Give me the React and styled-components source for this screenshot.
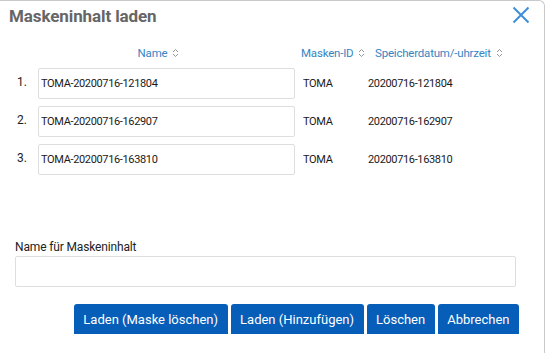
import styled, { createGlobalStyle } from 'styled-components';

const GlobalStyle = createGlobalStyle`
  html, body {
    margin: 0;
    padding: 0;
    background: #ffffff;
  }
  body {
    font-family: 'Source Sans Pro', Roboto, 'Liberation Sans', sans-serif;
  }
`;

const entries = [
  { name: 'TOMA-20200716-121804', id: 'TOMA', date: '20200716-121804' },
  { name: 'TOMA-20200716-162907', id: 'TOMA', date: '20200716-162907' },
  { name: 'TOMA-20200716-163810', id: 'TOMA', date: '20200716-163810' },
];

function SortIcon() {
  return (
    <SortSvg width="7" height="10" viewBox="0 0 7 10">
      <path d="M1 4 L3.5 1.5 L6 4" fill="none" stroke="#8a8a8a" strokeWidth="0.9" />
      <path d="M1 6 L3.5 8.5 L6 6" fill="none" stroke="#8a8a8a" strokeWidth="0.9" />
    </SortSvg>
  );
}

export default function App() {
  return (
    <>
      <GlobalStyle />
      <Dialog>
        <TitleBar>
          <Title>Maskeninhalt laden</Title>
          <CloseButton aria-label="Schließen">
            <svg width="18" height="18" viewBox="0 0 18 18">
              <path d="M1.5 1.5 L16.5 16.5 M16.5 1.5 L1.5 16.5" stroke="#3f8fd8" strokeWidth="2" fill="none" />
            </svg>
          </CloseButton>
        </TitleBar>

        <Table>
          <span />
          <HeaderCell align="center">
            Name <SortIcon />
          </HeaderCell>
          <HeaderCell pad={6}>
            Masken-ID <SortIcon />
          </HeaderCell>
          <HeaderCell pad={10}>
            Speicherdatum/-uhrzeit <SortIcon />
          </HeaderCell>

          {entries.map((e, i) => (
            <Row key={e.name}>
              <RowNumber>{i + 1}.</RowNumber>
              <NameInput defaultValue={e.name} />
              <Cell pad={8}>{e.id}</Cell>
              <Cell pad={3}>{e.date}</Cell>
            </Row>
          ))}
        </Table>

        <Form>
          <Label>Name für Maskeninhalt</Label>
          <TextInput />
        </Form>

        <ButtonBar>
          <Button>Laden (Maske löschen)</Button>
          <Button>Laden (Hinzufügen)</Button>
          <Button>Löschen</Button>
          <Button>Abbrechen</Button>
        </ButtonBar>
      </Dialog>
    </>
  );
}

const Dialog = styled.div`
  width: 545px;
  height: 353px;
  box-sizing: border-box;
  border-top: 1px solid #c9c9c9;
  border-right: 1px solid #c9c9c9;
  border-top-right-radius: 6px;
  background: #fff;
  display: flex;
  flex-direction: column;
`;

const TitleBar = styled.div`
  display: flex;
  align-items: center;
  justify-content: space-between;
  height: 30px;
  padding: 0 14px 0 9px;
`;

const Title = styled.h1`
  margin: 0;
  font-size: 17px;
  font-weight: 700;
  color: #666;
  letter-spacing: -0.1px;
`;

const CloseButton = styled.button`
  border: none;
  background: none;
  padding: 0;
  display: flex;
  cursor: pointer;
  margin-top: -2px;
`;

const Table = styled.div`
  display: grid;
  grid-template-columns: 38px 257px 70px 1fr;
  align-items: center;
  row-gap: 7px;
  margin-top: 12px;
`;

const Row = styled.div`
  display: contents;
`;

const HeaderCell = styled.div`
  font-size: 11.5px;
  letter-spacing: -0.2px;
  color: #3585c2;
  display: flex;
  align-items: center;
  gap: 5px;
  justify-content: ${(p) => (p.align === 'center' ? 'center' : 'flex-start')};
  padding-left: ${(p) => (p.pad ? `${p.pad}px` : '0')};
  padding-right: ${(p) => (p.align === 'center' ? '16px' : '0')};
  height: 20px;
  margin-bottom: -2px;
  white-space: nowrap;
`;

const SortSvg = styled.svg`
  flex: none;
`;

const RowNumber = styled.div`
  font-size: 12px;
  color: #222;
  text-align: right;
  padding-right: 11px;
  margin-top: -3px;
`;

const NameInput = styled.input`
  box-sizing: border-box;
  height: 31px;
  width: 257px;
  border: 1px solid #dedede;
  border-radius: 2px;
  padding: 0 2px;
  font-family: inherit;
  font-size: 11px;
  letter-spacing: -0.35px;
  color: #1a1a1a;
  outline: none;
`;

const Cell = styled.div`
  font-size: 11px;
  letter-spacing: -0.35px;
  color: #1a1a1a;
  padding-left: ${(p) => `${p.pad}px`};
  white-space: nowrap;
`;

const Form = styled.div`
  display: flex;
  flex-direction: column;
  padding: 0 30px 0 15px;
  margin-top: 65px;
`;

const Label = styled.label`
  font-size: 12px;
  line-height: 14px;
  letter-spacing: -0.15px;
  color: #222;
  margin-bottom: 2px;
`;

const TextInput = styled.input`
  box-sizing: border-box;
  height: 31px;
  width: 501px;
  border: 1px solid #dedede;
  border-radius: 2px;
  outline: none;
`;

const ButtonBar = styled.div`
  display: flex;
  justify-content: flex-end;
  gap: 3px;
  padding-right: 25px;
  margin-top: 17px;
`;

const Button = styled.button`
  height: 30px;
  border: none;
  border-radius: 3px 3px 0 0;
  background: #065eb9;
  color: #fff;
  font-family: inherit;
  font-size: 13px;
  padding: 0 9.5px;
  cursor: pointer;
`;
